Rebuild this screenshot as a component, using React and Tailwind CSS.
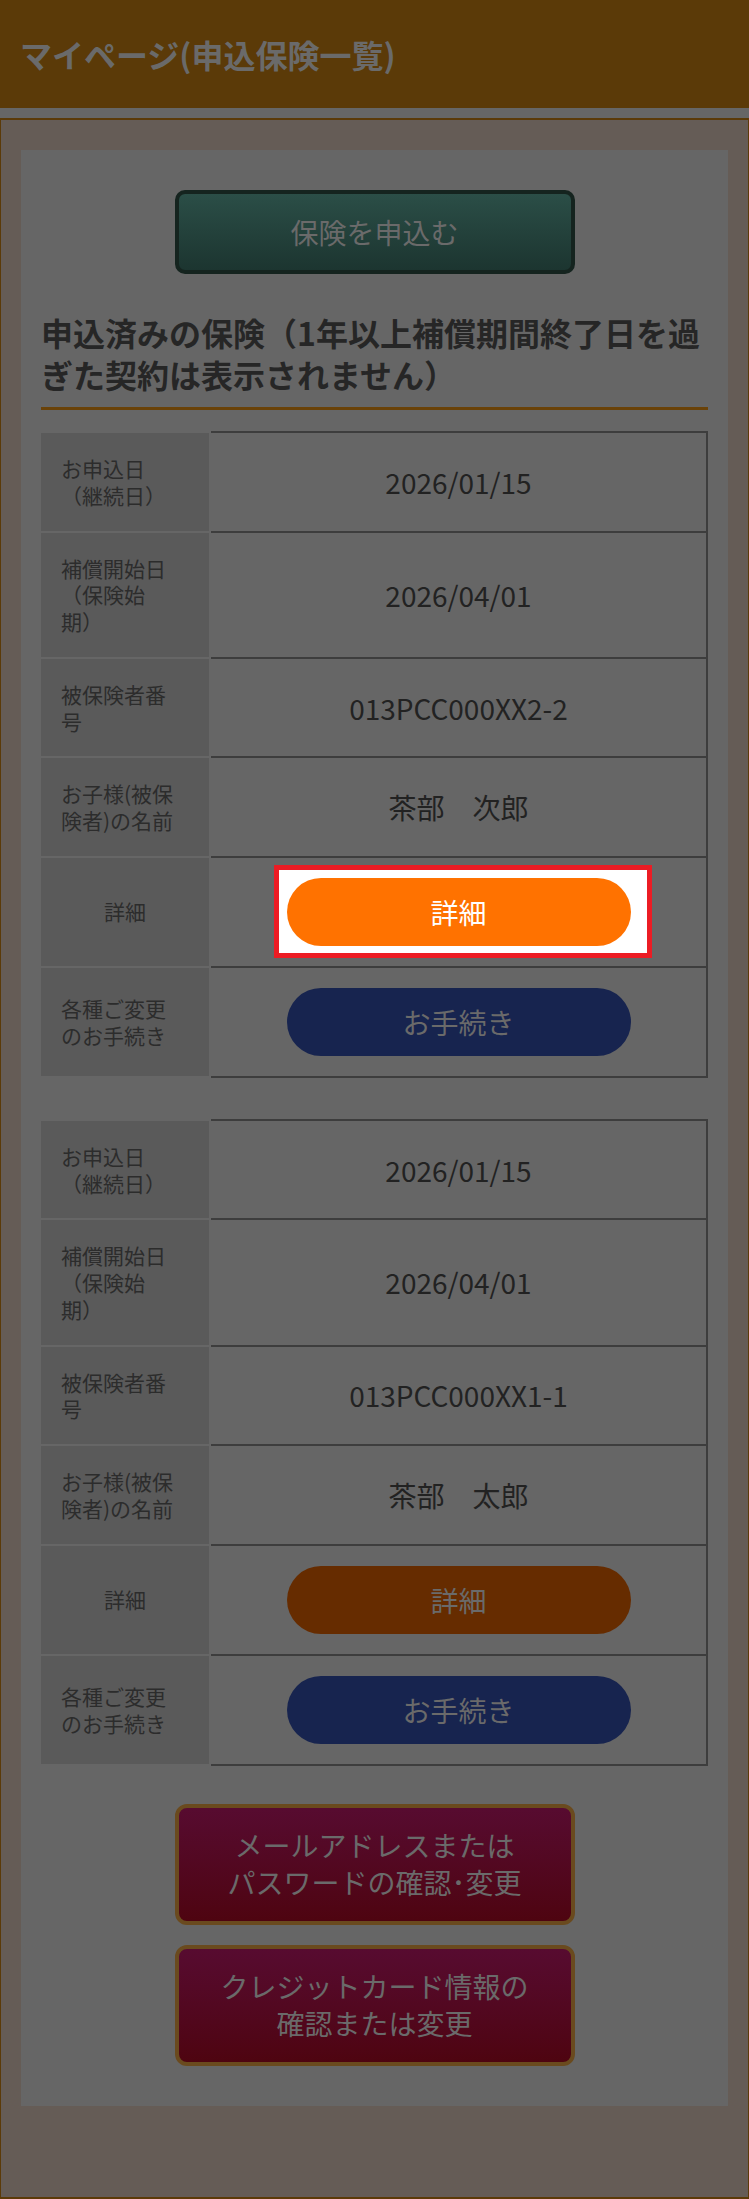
const font = { fontFamily: '"Noto Sans CJK JP", "Noto Sans", sans-serif' };

function Row({ label, children, center, last, tall }) {
  return (
    <div className="grid grid-cols-[168px_1fr] gap-x-[2px]">
      <div
        className={`flex items-center border-t-2 border-[#666] bg-[#5a5a5a] py-[22px] text-[21px] leading-[26.75px] text-[#2c2c2c] ${
          center ? "justify-center" : "pl-5"
        } ${last ? "border-b-2" : ""}`}
      >
        <p>{label}</p>
      </div>
      <div
        className={`flex items-center justify-center border-t-2 border-r-2 border-[#3d3d3d] ${
          last ? "border-b-2" : ""
        } ${tall ? "py-5" : ""}`}
      >
        {children}
      </div>
    </div>
  );
}

function Value({ children }) {
  return <span className="text-[28px] leading-[36px] text-[#222]">{children}</span>;
}

function PolicyTable({ date, start, number, name, spotlight }) {
  return (
    <div>
      <Row
        label={
          <>
            お申込日
            <br />
            （継続日）
          </>
        }
      >
        <Value>{date}</Value>
      </Row>
      <Row
        label={
          <>
            補償開始日
            <br />
            （保険始
            <br />
            期）
          </>
        }
      >
        <Value>{start}</Value>
      </Row>
      <Row
        label={
          <>
            被保険者番
            <br />号
          </>
        }
      >
        <Value>{number}</Value>
      </Row>
      <Row
        label={
          <>
            お子様(被保
            <br />
            険者)の名前
          </>
        }
      >
        <Value>{name}</Value>
      </Row>
      <Row label="詳細" center tall>
        <div className="relative">
          {spotlight && (
            <div className="absolute -left-[13px] -right-[21px] -top-[13px] -bottom-[12px] border-[5px] border-[#ec1c24] bg-white" />
          )}
          <button
            className={`relative flex h-[68px] w-[344px] items-center justify-center rounded-full text-[28px] ${
              spotlight ? "bg-[#ff7200] text-white" : "bg-[#662c00] text-[#6a6a6a]"
            }`}
          >
            詳細
          </button>
        </div>
      </Row>
      <Row
        label={
          <>
            各種ご変更
            <br />
            のお手続き
          </>
        }
        last
        tall
      >
        <button className="flex h-[68px] w-[344px] items-center justify-center rounded-full bg-[#17244f] text-[28px] text-[#6a6a6a]">
          お手続き
        </button>
      </Row>
    </div>
  );
}

export default function App() {
  return (
    <div className="min-h-screen bg-[#666]" style={font}>
      <header className="flex h-[108px] items-center bg-[#5b3a08] px-5">
        <h1 className="text-[32px] font-bold text-[#6a6a6a]">マイページ(申込保険一覧)</h1>
      </header>

      <div className="mt-[10px] border-x border-t-2 border-b-2 border-[#5b3a08] bg-[#655c56] px-5 pt-[30px] pb-[91px]">
        <div className="bg-[#666] px-5 py-10">
          <button className="mx-auto flex h-[84px] w-[400px] items-center justify-center rounded-[10px] border-4 border-[#15241f] bg-gradient-to-b from-[#2b4e47] to-[#1c3530] text-[28px] text-[#6a6a6a]">
            保険を申込む
          </button>

          <h2 className="mt-[37px] border-b-[3px] border-[#6a4208] pb-3 text-[32px] font-bold leading-[42px] text-[#262626]">
            申込済みの保険（1年以上補償期間終了日を過ぎた契約は表示されません）
          </h2>

          <div className="mt-[21px]">
            <PolicyTable
              date="2026/01/15"
              start="2026/04/01"
              number="013PCC000XX2-2"
              name="茶部　次郎"
              spotlight
            />
          </div>

          <div className="mt-[41px]">
            <PolicyTable
              date="2026/01/15"
              start="2026/04/01"
              number="013PCC000XX1-1"
              name="茶部　太郎"
            />
          </div>

          <div className="mt-[38px] flex flex-col items-center gap-5">
            <button className="flex h-[121px] w-[400px] items-center justify-center rounded-[12px] border-4 border-[#6a4a1e] bg-gradient-to-b from-[#570b30] to-[#4e0410] text-[28px] leading-[37px] text-[#6a6a6a]">
              メールアドレスまたは
              <br />
              パスワードの確認･変更
            </button>
            <button className="flex h-[121px] w-[400px] items-center justify-center rounded-[12px] border-4 border-[#6a4a1e] bg-gradient-to-b from-[#570b30] to-[#4e0410] text-[28px] leading-[37px] text-[#6a6a6a]">
              クレジットカード情報の
              <br />
              確認または変更
            </button>
          </div>
        </div>
      </div>
    </div>
  );
}
